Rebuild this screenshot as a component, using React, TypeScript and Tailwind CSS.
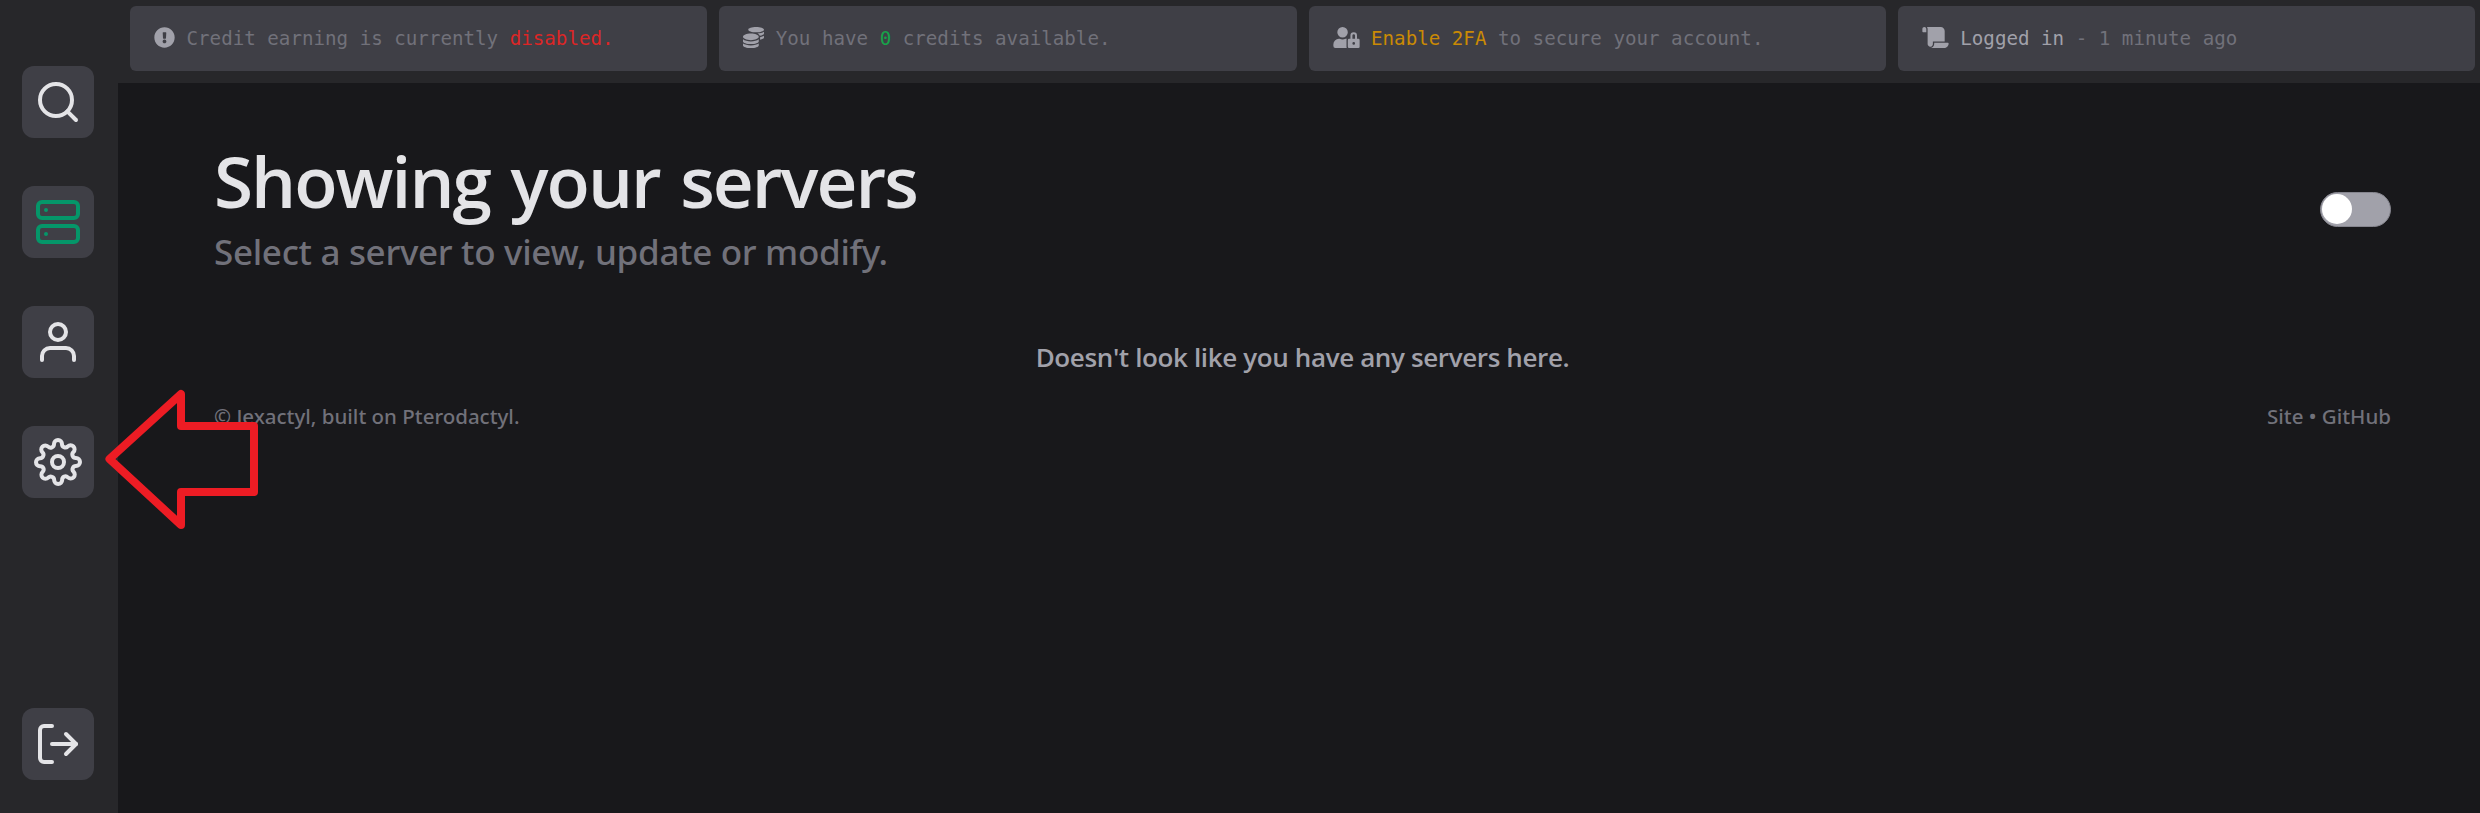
import type { ReactNode } from "react";
import { FiLogOut, FiSearch, FiServer, FiSettings, FiUser } from "react-icons/fi";
import { FaCoins, FaExclamationCircle, FaScroll, FaUserLock } from "react-icons/fa";

function NavButton({ children, active = false, label }: { children: ReactNode; active?: boolean; label: string }) {
  return (
    <button
      aria-label={label}
      className={`flex size-[72px] items-center justify-center rounded-xl bg-[#3f3f46] ${active ? "text-[#059669]" : "text-[#e4e4e7]"}`}
    >
      {children}
    </button>
  );
}

function StatusCard({ icon, children }: { icon: ReactNode; children: ReactNode }) {
  return (
    <div className="flex h-[65px] flex-1 items-start rounded-md bg-[#3f3f46] pt-[21px] pl-6 text-[#71717a]">
      <span className="mr-[11.5px] text-[21px] text-[#a1a1aa]">{icon}</span>
      <p className="pt-px font-['DejaVu_Sans_Mono',monospace] text-[19.18px] leading-[22px] whitespace-pre">{children}</p>
    </div>
  );
}

export default function App() {
  return (
    <div className="relative flex h-[813px] w-[2480px] overflow-hidden bg-[#18181b] font-['Open_Sans',sans-serif]">
      <aside className="flex w-[118px] shrink-0 flex-col justify-between bg-[#27272a] pt-[66px] pb-[33px] pl-[22px]">
        <nav className="flex flex-col gap-12">
          <NavButton label="Search"><FiSearch size={48} /></NavButton>
          <NavButton label="Servers" active><FiServer size={48} /></NavButton>
          <NavButton label="Account"><FiUser size={48} /></NavButton>
          <NavButton label="Settings"><FiSettings size={48} /></NavButton>
        </nav>
        <NavButton label="Log out"><FiLogOut size={48} /></NavButton>
      </aside>

      <div className="flex min-w-0 flex-1 flex-col">
        <header className="flex h-[83px] gap-3 bg-[#27272a] pt-1.5 pr-[5px] pl-3">
          <StatusCard icon={<FaExclamationCircle />}>
            Credit earning is currently <span className="text-[#dc2626]">disabled.</span>
          </StatusCard>
          <StatusCard icon={<FaCoins />}>
            You have <span className="text-[#16a34a]">0</span> credits available.
          </StatusCard>
          <StatusCard icon={<FaUserLock className="h-[21px] w-[27px]" />}>
            <span className="text-[#ca8a04]">Enable 2FA</span> to secure your account.
          </StatusCard>
          <StatusCard icon={<FaScroll className="h-[21px] w-[27px]" />}>
            <span className="text-[#a1a1aa]">Logged in</span> - 1 minute ago
          </StatusCard>
        </header>

        <main className="flex flex-col pr-[89px] pl-24">
          <div className="flex items-center justify-between pt-[62px]">
            <div>
              <h1 className="h-[87px] text-[71px] leading-[72px] font-semibold tracking-[-1.95px] text-[#e4e4e7] [word-spacing:4px]">Showing your servers</h1>
              <p className="h-[48px] font-['Noto_Sans',sans-serif] text-[35px] leading-[40px] font-medium tracking-[-0.31px] text-[#71717a]">Select a server to view, update or modify.</p>
            </div>
            <div className="mb-[7px] flex h-[35px] w-[71px] items-center rounded-full border border-[#85858e] bg-[#a1a1aa] p-px">
              <span className="size-[30px] rounded-full bg-white" />
            </div>
          </div>
          <p className="mt-[59px] text-center text-[26px] leading-9 font-semibold tracking-[-0.37px] text-[#a1a1aa]">Doesn't look like you have any servers here.</p>
          <footer className="mt-[26px] flex justify-between font-['Noto_Sans',sans-serif] text-[20.5px] leading-[30px] font-medium text-[#71717a]">
            <span>© Jexactyl, built on Pterodactyl.</span>
            <span>Site • GitHub</span>
          </footer>
        </main>
      </div>

      <svg className="absolute top-[380px] left-[100px]" width="170" height="160" viewBox="100 380 170 160" fill="none">
        <path d="M109.500 459L181 394V426H254V492H181V525Z" stroke="#ed1c24" strokeWidth="8" strokeLinejoin="round" />
      </svg>
    </div>
  );
}
